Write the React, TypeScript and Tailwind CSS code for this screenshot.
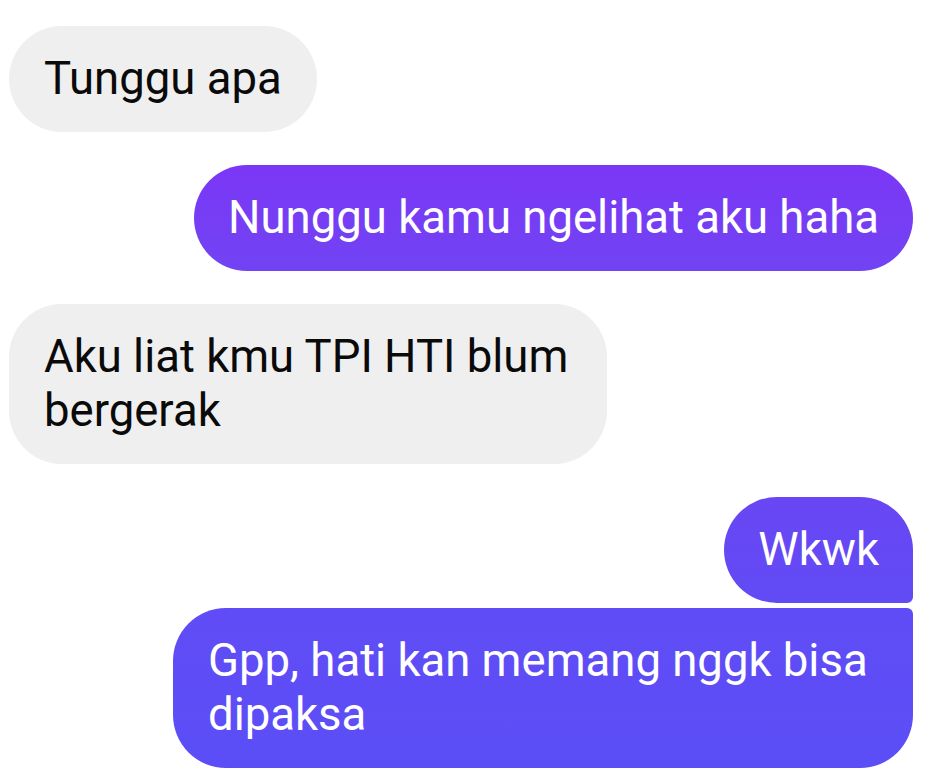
import React from "react";

const font = { fontFamily: "Roboto, 'Noto Sans', sans-serif" };

export default function App() {
  return (
    <div className="w-[933px] h-[770px] bg-white overflow-hidden" style={font}>
      <div className="flex flex-col pt-[26px] pl-[9px] pr-[20px]">
        <div className="flex justify-start">
          <div className="max-w-[598px] rounded-[53px] bg-[#efefef] px-[35px] py-[26px] text-[45.5px] leading-[54px] text-[#0a0a0a]">
            Tunggu apa
          </div>
        </div>
        <div className="flex justify-end mt-[33px]">
          <div className="max-w-[740px] rounded-[53px] bg-gradient-to-b from-[#7b37f6] to-[#7143f3] px-[34px] py-[26px] text-[45.5px] leading-[54px] text-white">
            Nunggu kamu ngelihat aku haha
          </div>
        </div>
        <div className="flex justify-start mt-[33px]">
          <div className="max-w-[598px] rounded-[53px] bg-[#efefef] px-[35px] py-[26px] text-[45.5px] leading-[54px] text-[#0a0a0a]">
            Aku liat kmu TPI HTI blum bergerak
          </div>
        </div>
        <div className="flex justify-end mt-[33px]">
          <div className="max-w-[740px] rounded-[53px] rounded-br-[6px] bg-gradient-to-b from-[#6946f4] to-[#614bf5] px-[34px] py-[26px] text-[45.5px] leading-[54px] text-white">
            Wkwk
          </div>
        </div>
        <div className="flex justify-end mt-[5px]">
          <div className="max-w-[740px] rounded-[53px] rounded-tr-[6px] bg-gradient-to-b from-[#604cf6] to-[#5b4ef6] px-[35px] py-[26px] text-[45.5px] leading-[54px] text-white">
            Gpp, hati kan memang nggk bisa dipaksa
          </div>
        </div>
      </div>
    </div>
  );
}
